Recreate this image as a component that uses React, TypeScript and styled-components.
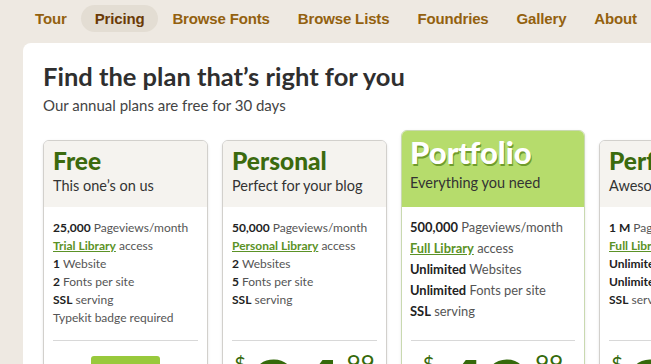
import React from 'react';
import styled, { createGlobalStyle } from 'styled-components';

const GlobalStyle = createGlobalStyle`
  html, body {
    margin: 0;
    padding: 0;
    background: #eee9e2;
    overflow: hidden;
  }
  body {
    font-family: Lato, 'Open Sans', sans-serif;
    color: #333;
  }
`;

const Page = styled.div`
  width: 651px;
  height: 364px;
  overflow: hidden;
`;

const Nav = styled.nav`
  display: flex;
  align-items: center;
  height: 27px;
  padding: 5px 0 0 21px;
`;

const NavItem = styled.a<{ active?: boolean }>`
  display: flex;
  align-items: center;
  height: 27px;
  padding: 0 14px;
  border-radius: 14px;
  font-family: 'Liberation Sans', Arial, sans-serif;
  font-weight: bold;
  font-size: 15px;
  letter-spacing: -0.15px;
  color: ${(p) => (p.active ? '#6a3a06' : '#93610f')};
  background: ${(p) => (p.active ? '#e3ddd3' : 'transparent')};
  text-decoration: none;
`;

const Panel = styled.main`
  margin: 11px 0 0 23px;
  background: #fff;
  border-radius: 8px 0 0 0;
  padding: 18px 0 0 20px;
  height: 400px;
`;

const Heading = styled.h1`
  margin: 0;
  font-size: 25.5px;
  line-height: 30px;
  font-weight: 700;
  color: #2f2f2f;
`;

const Subtitle = styled.p`
  margin: 4px 0 0;
  font-size: 15px;
  line-height: 20px;
  color: #444;
`;

const Cards = styled.div`
  display: flex;
  align-items: flex-start;
  gap: 14px;
  margin-top: 15px;
`;

const Card = styled.section<{ featured?: boolean }>`
  flex: none;
  width: ${(p) => (p.featured ? 184 : 165)}px;
  margin-top: ${(p) => (p.featured ? 0 : 10)}px;
  box-sizing: border-box;
  border: 1px solid ${(p) => (p.featured ? '#c9d9b0' : '#d2d0cc')};
  border-radius: 6px;
  box-shadow: 0 1px 3px rgba(0, 0, 0, 0.1);
  overflow: hidden;
  background: #fff;
`;

const CardHead = styled.header<{ featured?: boolean }>`
  box-sizing: border-box;
  height: ${(p) => (p.featured ? 76 : 66)}px;
  padding: ${(p) => (p.featured ? '1px 8px 0' : '5px 9px 0')};
  background: ${(p) => (p.featured ? '#b6dc6c' : '#f5f3ef')};
`;

const Title = styled.h2<{ featured?: boolean }>`
  margin: 0;
  font-size: ${(p) => (p.featured ? 31 : 24.5)}px;
  line-height: ${(p) => (p.featured ? 40 : 30)}px;
  font-weight: 900;
  color: ${(p) => (p.featured ? '#fff' : '#3b6a0e')};
  text-shadow: ${(p) => (p.featured ? '1px 2px 0 #6f9c2c' : 'none')};
`;

const Tagline = styled.p<{ featured?: boolean }>`
  margin: ${(p) => (p.featured ? '2px 0 0' : '1px 0 0')};
  font-size: 14.5px;
  line-height: 18px;
  color: #333;
`;

const Features = styled.ul<{ featured?: boolean }>`
  list-style: none;
  margin: 0;
  box-sizing: border-box;
  height: 133px;
  padding: ${(p) => (p.featured ? '10px 8px 0' : '12px 9px 0')};
  font-size: ${(p) => (p.featured ? 12.9 : 12)}px;
  line-height: ${(p) => (p.featured ? 21 : 18)}px;
  color: #555;
  white-space: nowrap;
`;

const Strong = styled.b`
  color: #222;
  font-weight: 700;
`;

const LibLink = styled.a`
  color: #5b9226;
  font-weight: 700;
  text-decoration: underline;
`;

const Divider = styled.hr`
  margin: 0 9px;
  border: 0;
  border-top: 1px solid #d8d8d8;
`;

const Price = styled.div`
  display: flex;
  align-items: flex-start;
  justify-content: center;
  height: 60px;
  padding-top: 12px;
  color: #356a0b;
`;

const Currency = styled.span`
  font-size: 20px;
  line-height: 20px;
  margin-top: 0;
  margin-right: 4px;
`;

const Amount = styled.span`
  font-size: 80px;
  line-height: 60px;
  margin-top: 4px;
  font-weight: 900;
  letter-spacing: -1px;
`;

const Cents = styled.span`
  font-size: 24px;
  line-height: 20px;
  margin-left: 6px;
`;

const ButtonRow = styled.div`
  display: flex;
  justify-content: center;
  padding: 15px 0 0;
`;

const SignUp = styled.button`
  width: 69px;
  height: 30px;
  border: 0;
  border-radius: 3px;
  background: #98c93c;
`;

type Plan = {
  name: string;
  tagline: string;
  featured?: boolean;
  features: React.ReactNode[];
  price?: string;
};

const plans: Plan[] = [
  {
    name: 'Free',
    tagline: 'This one’s on us',
    features: [
      <><Strong>25,000</Strong> Pageviews/month</>,
      <><LibLink>Trial Library</LibLink> access</>,
      <><Strong>1</Strong> Website</>,
      <><Strong>2</Strong> Fonts per site</>,
      <><Strong>SSL</Strong> serving</>,
      <>Typekit badge required</>,
    ],
  },
  {
    name: 'Personal',
    tagline: 'Perfect for your blog',
    price: '24',
    features: [
      <><Strong>50,000</Strong> Pageviews/month</>,
      <><LibLink>Personal Library</LibLink> access</>,
      <><Strong>2</Strong> Websites</>,
      <><Strong>5</Strong> Fonts per site</>,
      <><Strong>SSL</Strong> serving</>,
    ],
  },
  {
    name: 'Portfolio',
    tagline: 'Everything you need',
    featured: true,
    price: '49',
    features: [
      <><Strong>500,000</Strong> Pageviews/month</>,
      <><LibLink>Full Library</LibLink> access</>,
      <><Strong>Unlimited</Strong> Websites</>,
      <><Strong>Unlimited</Strong> Fonts per site</>,
      <><Strong>SSL</Strong> serving</>,
    ],
  },
  {
    name: 'Performance',
    tagline: 'Awesome for big sites',
    price: '99',
    features: [
      <><Strong>1 M</Strong> Pageviews/month</>,
      <><LibLink>Full Library</LibLink> access</>,
      <><Strong>Unlimited</Strong> Websites</>,
      <><Strong>Unlimited</Strong> Fonts per site</>,
      <><Strong>SSL</Strong> serving</>,
    ],
  },
];

const navItems = ['Tour', 'Pricing', 'Browse Fonts', 'Browse Lists', 'Foundries', 'Gallery', 'About'];

export default function App() {
  return (
    <Page>
      <GlobalStyle />
      <Nav>
        {navItems.map((item) => (
          <NavItem key={item} active={item === 'Pricing'}>
            {item}
          </NavItem>
        ))}
      </Nav>
      <Panel>
        <Heading>Find the plan that’s right for you</Heading>
        <Subtitle>Our annual plans are free for 30 days</Subtitle>
        <Cards>
          {plans.map((plan) => (
            <Card key={plan.name} featured={plan.featured}>
              <CardHead featured={plan.featured}>
                <Title featured={plan.featured}>{plan.name}</Title>
                <Tagline featured={plan.featured}>{plan.tagline}</Tagline>
              </CardHead>
              <Features featured={plan.featured}>
                {plan.features.map((f, i) => (
                  <li key={i}>{f}</li>
                ))}
              </Features>
              <Divider />
              {plan.price ? (
                <Price>
                  <Currency>$</Currency>
                  <Amount>{plan.price}</Amount>
                  <Cents>99</Cents>
                </Price>
              ) : (
                <ButtonRow>
                  <SignUp />
                </ButtonRow>
              )}
            </Card>
          ))}
        </Cards>
      </Panel>
    </Page>
  );
}
